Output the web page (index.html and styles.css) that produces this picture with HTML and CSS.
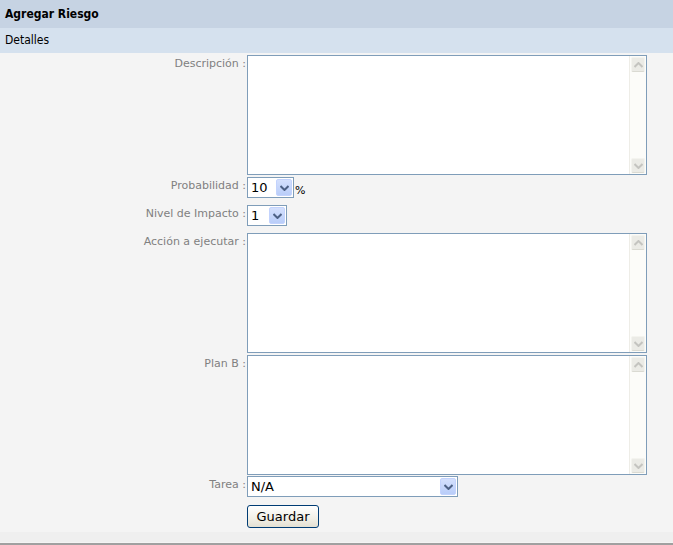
FILE: index.html
```html
<!DOCTYPE html>
<html lang="es">
<head>
<meta charset="utf-8">
<title>Agregar Riesgo</title>
<link rel="stylesheet" href="styles.css">
</head>
<body>
<div class="page">
  <div class="title-bar">Agregar Riesgo</div>
  <div class="section-bar">Detalles</div>
  <div class="form">
    <div class="row row-desc">
      <label class="lbl">Descripción :</label>
      <div class="ta">
        <div class="ta-body"></div>
        <div class="sb">
          <div class="sb-btn"><svg width="9" height="6" viewBox="0 0 9 6"><path d="M0.5 5 L4.5 1 L8.5 5" fill="none" stroke="#c4c4c0" stroke-width="2"/></svg></div>
          <div class="sb-track"></div>
          <div class="sb-btn"><svg width="9" height="6" viewBox="0 0 9 6"><path d="M0.5 1 L4.5 5 L8.5 1" fill="none" stroke="#c4c4c0" stroke-width="2"/></svg></div>
        </div>
      </div>
    </div>
    <div class="row row-prob">
      <label class="lbl">Probabilidad :</label>
      <div class="ctl">
        <div class="sel sel-prob"><span class="sel-val">10</span><span class="sel-btn"><svg width="9" height="6" viewBox="0 0 9 6"><path d="M0.5 1 L4.5 5 L8.5 1" fill="none" stroke="#4d6185" stroke-width="2"/></svg></span></div>
        <span class="pct">%</span>
      </div>
    </div>
    <div class="row row-nivel">
      <label class="lbl">Nivel de Impacto :</label>
      <div class="ctl">
        <div class="sel sel-nivel"><span class="sel-val">1</span><span class="sel-btn"><svg width="9" height="6" viewBox="0 0 9 6"><path d="M0.5 1 L4.5 5 L8.5 1" fill="none" stroke="#4d6185" stroke-width="2"/></svg></span></div>
      </div>
    </div>
    <div class="row row-accion">
      <label class="lbl">Acción a ejecutar :</label>
      <div class="ta">
        <div class="ta-body"></div>
        <div class="sb">
          <div class="sb-btn"><svg width="9" height="6" viewBox="0 0 9 6"><path d="M0.5 5 L4.5 1 L8.5 5" fill="none" stroke="#c4c4c0" stroke-width="2"/></svg></div>
          <div class="sb-track"></div>
          <div class="sb-btn"><svg width="9" height="6" viewBox="0 0 9 6"><path d="M0.5 1 L4.5 5 L8.5 1" fill="none" stroke="#c4c4c0" stroke-width="2"/></svg></div>
        </div>
      </div>
    </div>
    <div class="row row-plan">
      <label class="lbl">Plan B :</label>
      <div class="ta">
        <div class="ta-body"></div>
        <div class="sb">
          <div class="sb-btn"><svg width="9" height="6" viewBox="0 0 9 6"><path d="M0.5 5 L4.5 1 L8.5 5" fill="none" stroke="#c4c4c0" stroke-width="2"/></svg></div>
          <div class="sb-track"></div>
          <div class="sb-btn"><svg width="9" height="6" viewBox="0 0 9 6"><path d="M0.5 1 L4.5 5 L8.5 1" fill="none" stroke="#c4c4c0" stroke-width="2"/></svg></div>
        </div>
      </div>
    </div>
    <div class="row row-tarea">
      <label class="lbl">Tarea :</label>
      <div class="ctl">
        <div class="sel sel-tarea"><span class="sel-val">N/A</span><span class="sel-btn"><svg width="9" height="6" viewBox="0 0 9 6"><path d="M0.5 1 L4.5 5 L8.5 1" fill="none" stroke="#4d6185" stroke-width="2"/></svg></span></div>
      </div>
    </div>
    <div class="row row-btn">
      <span class="lbl"></span>
      <div class="ctl"><button class="btn" type="button">Guardar</button></div>
    </div>
  </div>
  <div class="footer-strip"></div>
  <div class="footer-line"></div>
</div>
</body>
</html>
```
FILE: styles.css
```css
html, body {
  margin: 0;
  padding: 0;
  background: #ffffff;
}
body {
  font-family: "DejaVu Sans", Verdana, sans-serif;
}
.page {
  width: 673px;
  height: 545px;
  display: flex;
  flex-direction: column;
  background: #f4f4f4;
}
.title-bar {
  height: 28px;
  box-sizing: border-box;
  background: #c6d3e3;
  color: #000;
  font-family: "DejaVu Sans Condensed", "DejaVu Sans", sans-serif;
  font-weight: bold;
  font-size: 12px;
  line-height: 28px;
  padding-left: 5px;
}
.section-bar {
  height: 25px;
  box-sizing: border-box;
  background: #d5e1ee;
  color: #000;
  font-family: "DejaVu Sans Condensed", "DejaVu Sans", sans-serif;
  font-size: 12px;
  line-height: 24px;
  padding-left: 5px;
}
.form {
  padding-top: 2px;
  height: 479px;
  box-sizing: border-box;
  display: flex;
  flex-direction: column;
}
.row {
  display: grid;
  grid-template-columns: 247px 400px;
}
.lbl {
  text-align: right;
  color: #808080;
  font-size: 11px;
  padding-right: 1px;
  padding-top: 2px;
  line-height: 13px;
}
.row-prob { margin-top: 2px; }
.row-nivel { margin-top: 7px; }
.row-accion { margin-top: 7px; }
.row-plan { margin-top: 2px; }
.row-tarea { margin-top: 1px; }
.row-btn { margin-top: 8px; }
.row-prob .lbl, .row-nivel .lbl, .row-tarea .lbl { padding-top: 2px; }

.ta {
  width: 400px;
  height: 120px;
  box-sizing: border-box;
  border: 1px solid #7f9db9;
  background: #ffffff;
  display: flex;
}
.ta-body {
  flex: 1;
}
.sb {
  width: 17px;
  background: #fcfcf9;
  border-left: 1px solid #eeede7;
  display: flex;
  flex-direction: column;
  align-items: center;
  padding: 1px 0;
  box-sizing: border-box;
}
.sb-track { flex: 1; }
.sb-btn {
  width: 14px;
  height: 15px;
  box-sizing: border-box;
  background: #ebebe6;
  border: 1px solid #f4f4ef;
  border-bottom-color: #dadad2;
  border-radius: 2px;
  display: flex;
  align-items: center;
  justify-content: center;
}
.ctl {
  display: flex;
  align-items: center;
}
.sel {
  height: 21px;
  box-sizing: border-box;
  border: 1px solid #7f9db9;
  background: #ffffff;
  display: flex;
  align-items: stretch;
  font-family: "DejaVu Sans", Tahoma, sans-serif;
  font-size: 13px;
  color: #000;
}
.sel-val {
  flex: 1;
  padding-left: 3px;
  line-height: 19px;
}
.sel-btn {
  width: 16px;
  margin: 1px;
  box-sizing: border-box;
  background: linear-gradient(#d4e0fd, #b9cdf9);
  border: 1px solid #c3d3fd;
  border-radius: 2px;
  display: flex;
  align-items: center;
  justify-content: center;
}
.sel-prob { width: 47px; }
.sel-nivel { width: 40px; }
.sel-tarea { width: 211px; }
.pct {
  font-size: 11px;
  color: #000;
  padding-left: 1px;
  align-self: flex-end;
  line-height: 14px;
}
.btn {
  width: 72px;
  height: 23px;
  box-sizing: border-box;
  border: 1px solid #003c74;
  border-radius: 3px;
  background: linear-gradient(#ffffff, #f1efe6 60%, #e3e0d3);
  font-family: "DejaVu Sans", Tahoma, sans-serif;
  font-size: 13px;
  color: #000;
  padding: 0;
}
.footer-strip {
  height: 10px;
  background: #efefef;
}
.footer-line {
  margin-top: auto;
  height: 2px;
  background: #a0a0a0;
}
```
